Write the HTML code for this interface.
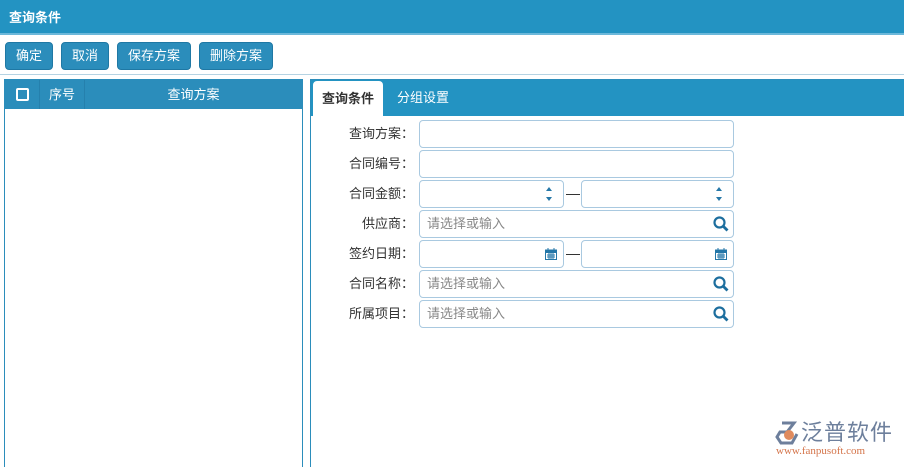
<!DOCTYPE html>
<html style="width:904px;height:467px;overflow:hidden"><head><meta charset="utf-8"><style>
*{box-sizing:border-box;margin:0;padding:0}
body{width:904px;height:467px;background:#fff;font-family:"Liberation Sans","Noto Sans CJK SC",sans-serif;font-size:13px;color:#333;position:relative;overflow:hidden}
.top{position:absolute;left:0;top:0;width:904px;height:35px;background:#2393c2;color:#fff;font-weight:bold;font-size:13px;line-height:35px;padding-left:9px;border-bottom:2px solid #6cb8da}
.btn{position:absolute;top:42px;height:28px;background:#2b8dbb;border:1px solid #1f78a4;border-radius:4px;color:#fff;line-height:26px;text-align:center;font-size:13px}
.sep{position:absolute;left:0;top:74px;width:904px;height:1px;background:#b5d3e3}
.lp{position:absolute;left:4px;top:79px;width:299px;height:400px;border:1px solid #2b8dbb}
.lh{height:29px;background:#2b8dbb;color:#fff;position:relative}
.lh div{position:absolute;top:0;height:29px;line-height:29px;border-right:1px solid #2580ad}
.rp{position:absolute;left:310px;top:79px;width:600px;height:400px;border:1px solid #2b8dbb;border-right:none}
.rh{height:36px;background:#2393c2;position:relative}
.tab{position:absolute;top:0;height:36px;line-height:36px;color:#fff;font-size:13px}
.lab{position:absolute;left:304px;width:110px;text-align:right;font-size:13px;color:#333;line-height:28px}
.in{position:absolute;height:28px;border:1px solid #a9c9e0;border-radius:4px;background:#fff;color:#888;line-height:26px;padding-left:7px;font-size:13px}
.dash{position:absolute;left:566px;width:14px;height:1px;background:#333}
</style></head><body>
<div class="top">查询条件</div>
<div class="btn" style="left:5px;width:48px">确定</div>
<div class="btn" style="left:61px;width:48px">取消</div>
<div class="btn" style="left:117px;width:74px">保存方案</div>
<div class="btn" style="left:199px;width:74px">删除方案</div>
<div class="sep"></div>
<div class="lp"><div class="lh">
<div style="left:0;width:35px"><span style="position:absolute;left:11px;top:8px;width:13px;height:13px;border:2px solid #fff;border-radius:2px"></span></div>
<div style="left:35px;width:45px;text-align:center">序号</div>
<div style="left:80px;width:217px;text-align:center;border:none">查询方案</div>
</div></div>
<div class="rp"><div class="rh">
<div class="tab" style="left:2px;top:1px;width:70px;height:35px;background:#fff;color:#333;font-weight:bold;text-align:center;border-radius:4px 4px 0 0">查询条件</div>
<div class="tab" style="left:86px">分组设置</div>
</div></div>

<div class="lab" style="top:120px">查询方案：</div>
<div class="in" style="left:419px;top:120px;width:315px"></div>
<div class="lab" style="top:150px">合同编号：</div>
<div class="in" style="left:419px;top:150px;width:315px"></div>
<div class="lab" style="top:180px">合同金额：</div>
<div class="in" style="left:419px;top:180px;width:145px"><svg style="position:absolute;right:10px;top:5px" width="8" height="16"><path d="M4 1L7 5H1z M4 15L7 11H1z" fill="#2577a8"/></svg></div>
<div class="dash" style="top:194px"></div>
<div class="in" style="left:581px;top:180px;width:153px"><svg style="position:absolute;right:10px;top:5px" width="8" height="16"><path d="M4 1L7 5H1z M4 15L7 11H1z" fill="#2577a8"/></svg></div>
<div class="lab" style="top:210px">供应商：</div>
<div class="in" style="left:419px;top:210px;width:315px">请选择或输入<svg style="position:absolute;right:4px;top:5px" width="16" height="16"><circle cx="6.5" cy="6.5" r="5" fill="none" stroke="#1d6e9e" stroke-width="2.2"/><path d="M10 10L14.5 14.5" stroke="#1d6e9e" stroke-width="2.8"/></svg></div>
<div class="lab" style="top:240px">签约日期：</div>
<div class="in" style="left:419px;top:240px;width:145px"><svg style="position:absolute;right:6px;top:7px" width="12" height="12"><rect x="0.5" y="2" width="11" height="9.5" fill="none" stroke="#2577a8"/><rect x="0.5" y="2" width="11" height="3" fill="#2577a8"/><path d="M3 0v3M9 0v3M2 7h8M2 9h8M4 5v6M6 5v6M8 5v6" stroke="#2577a8" stroke-width="1"/></svg></div>
<div class="dash" style="top:254px"></div>
<div class="in" style="left:581px;top:240px;width:153px"><svg style="position:absolute;right:6px;top:7px" width="12" height="12"><rect x="0.5" y="2" width="11" height="9.5" fill="none" stroke="#2577a8"/><rect x="0.5" y="2" width="11" height="3" fill="#2577a8"/><path d="M3 0v3M9 0v3M2 7h8M2 9h8M4 5v6M6 5v6M8 5v6" stroke="#2577a8" stroke-width="1"/></svg></div>
<div class="lab" style="top:270px">合同名称：</div>
<div class="in" style="left:419px;top:270px;width:315px">请选择或输入<svg style="position:absolute;right:4px;top:5px" width="16" height="16"><circle cx="6.5" cy="6.5" r="5" fill="none" stroke="#1d6e9e" stroke-width="2.2"/><path d="M10 10L14.5 14.5" stroke="#1d6e9e" stroke-width="2.8"/></svg></div>
<div class="lab" style="top:300px">所属项目：</div>
<div class="in" style="left:419px;top:300px;width:315px">请选择或输入<svg style="position:absolute;right:4px;top:5px" width="16" height="16"><circle cx="6.5" cy="6.5" r="5" fill="none" stroke="#1d6e9e" stroke-width="2.2"/><path d="M10 10L14.5 14.5" stroke="#1d6e9e" stroke-width="2.8"/></svg></div>

<svg style="position:absolute;left:774px;top:421px" width="26" height="24"><path d="M8 2H20L13 11H6L3 16 7 22H18L23 13" fill="none" stroke="#6d7f9c" stroke-width="3"/><circle cx="15" cy="14" r="5" fill="#e08b5e"/></svg>
<div style="position:absolute;left:801px;top:420px;font-size:22px;color:#6d7f9c;letter-spacing:1px;line-height:26px">泛普软件</div>
<div style="position:absolute;left:776px;top:445px;font-size:11px;color:#d4744a;font-family:'Liberation Serif',serif">www.fanpusoft.com</div>
</body></html>
